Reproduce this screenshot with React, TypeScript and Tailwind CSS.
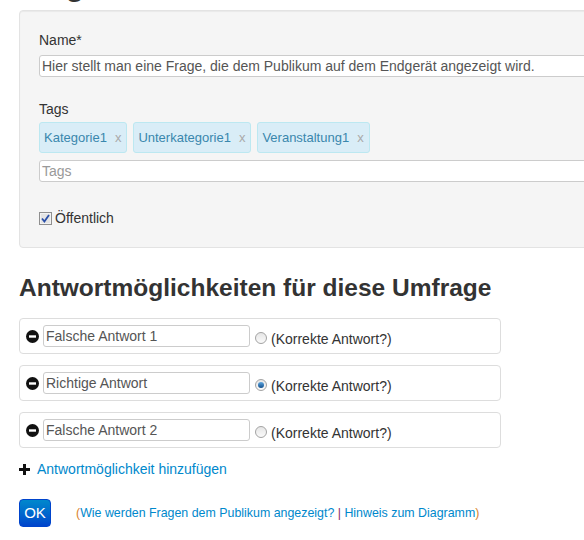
import React from 'react'

const tags = ['Kategorie1', 'Unterkategorie1', 'Veranstaltung1']

const answers = [
    { text: 'Falsche Antwort 1', correct: false },
    { text: 'Richtige Antwort', correct: true },
    { text: 'Falsche Antwort 2', correct: false },
]

const MinusSign: React.FC = () => (
    <svg width="13" height="13" viewBox="0 0 13 13" className="shrink-0">
        <circle cx="6.5" cy="6.5" r="6.5" fill="#111" />
        <rect x="3" y="5.3" width="7" height="2.4" fill="#fff" />
    </svg>
)

const PlusSign: React.FC = () => (
    <svg width="11" height="11" viewBox="0 0 11 11" className="shrink-0">
        <rect x="4" y="0" width="3" height="11" fill="#111" />
        <rect x="0" y="4" width="11" height="3" fill="#111" />
    </svg>
)

const Radio: React.FC<{ checked: boolean }> = ({ checked }) => (
    <span className="flex h-[12px] w-[12px] shrink-0 items-center justify-center rounded-full border border-[#a3a3a3] bg-gradient-to-b from-[#e6e6e6] to-[#fafafa]">
        {checked && (
            <span className="h-[6px] w-[6px] rounded-full bg-gradient-to-b from-[#5fa7e0] to-[#0f4f8c]" />
        )}
    </span>
)

const App: React.FC = () => {
    return (
        <div className="h-[540px] w-[584px] overflow-hidden bg-white font-['Liberation_Sans',Arial,sans-serif] text-[14px] leading-5 text-[#333]">
            <div className="pl-[19px]">
                <h2 className="mb-2 mt-[-31px] text-[30px] font-bold leading-[33px]">Frage bearbeiten</h2>

                <div className="w-[620px] rounded-[4px] border border-[#e3e3e3] bg-[#f5f5f5] p-[19px] shadow-[inset_0_1px_1px_rgba(0,0,0,0.05)]">
                    <label className="mb-[5px] block">Name*</label>
                    <div className="flex h-[22px] w-full items-center rounded-[3px] border border-[#ccc] bg-white px-[2px] text-[#555]">
                        Hier stellt man eine Frage, die dem Publikum auf dem Endgerät angezeigt wird.
                    </div>

                    <label className="mb-[3px] mt-[22px] block">Tags</label>
                    <div className="flex gap-[6px]">
                        {tags.map((t) => (
                            <span
                                key={t}
                                className="flex h-[31px] items-center gap-[8px] rounded-[3px] border border-[#bce8f1] bg-[#d9edf7] pl-[4px] pr-[5px] text-[13px] text-[#3a87ad]"
                            >
                                {t}
                                <span className="text-[#aaa]">x</span>
                            </span>
                        ))}
                    </div>
                    <div className="mt-[7px] flex h-[22px] w-full items-center rounded-[3px] border border-[#ccc] bg-white px-[2px] text-[#999]">
                        Tags
                    </div>

                    <div className="mt-[26px] flex h-5 items-center gap-[3px]">
                        <svg width="13" height="13" viewBox="0 0 13 13" className="shrink-0">
                            <rect x="0.5" y="0.5" width="12" height="12" fill="#f2f2f2" stroke="#8f8f8f" />
                            <rect x="2" y="2" width="9" height="9" fill="#e4e4e4" />
                            <path d="M3 6.5 L5.4 9.5 L10 3" fill="none" stroke="#2a4fa8" strokeWidth="1.8" />
                        </svg>
                        <span>Öffentlich</span>
                    </div>
                </div>

                <h3 className="mt-5 mb-[10px] text-[24.5px] font-bold leading-[40px]">Antwortmöglichkeiten für diese Umfrage</h3>

                {answers.map((a) => (
                    <div
                        key={a.text}
                        className="mb-[11px] flex h-[36px] w-[482px] items-center rounded-[4px] border border-[#ddd] px-[6px]"
                    >
                        <MinusSign />
                        <div className="ml-[4px] flex h-[22px] w-[207px] items-center rounded-[3px] border border-[#ccc] bg-white px-[2px] text-[#555]">
                            {a.text}
                        </div>
                        <span className="ml-[5px] mt-[4px]">
                            <Radio checked={a.correct} />
                        </span>
                        <span className="ml-[4px] mt-[5px]">(Korrekte Antwort?)</span>
                    </div>
                ))}

                <div className="flex h-5 items-center gap-[7px]">
                    <PlusSign />
                    <a className="text-[#0088cc]">Antwortmöglichkeit hinzufügen</a>
                </div>

                <div className="mt-5 flex items-center">
                    <button className="h-[28px] w-[32px] rounded-[4px] border border-[#0044cc] bg-gradient-to-b from-[#0088cc] to-[#0044cc] text-[15px] text-white">
                        OK
                    </button>
                    <span className="ml-[25px] text-[12.4px]">
                        <span className="text-[#d9822b]">(</span>
                        <a className="text-[#0088cc]">Wie werden Fragen dem Publikum angezeigt?</a>
                        <span className="text-[#8a2b6a]"> | </span>
                        <a className="text-[#0088cc]">Hinweis zum Diagramm</a>
                        <span className="text-[#d9822b]">)</span>
                    </span>
                </div>
            </div>
        </div>
    )
}

export default App
